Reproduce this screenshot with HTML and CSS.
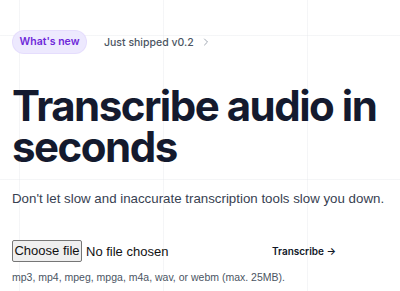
FILE: index.html
```html
<!DOCTYPE html>
<html lang="en">
<head>
<meta charset="utf-8">
<link rel="stylesheet" href="styles.css">
</head>
<body>
<div class="grid-bg"></div>
<main class="hero">
  <div class="announce">
    <span class="badge">What's new</span>
    <span class="shipped">Just shipped v0.2
      <svg class="chev" viewBox="0 0 20 20" width="12" height="12"><path d="M7.5 5l5 5-5 5" fill="none" stroke="currentColor" stroke-width="1.6" stroke-linecap="round" stroke-linejoin="round"/></svg>
    </span>
  </div>
  <h1 class="title">Transcribe audio in seconds</h1>
  <p class="lead">Don't let slow and inaccurate transcription tools slow you down.</p>
  <form class="upload">
    <div class="row">
      <label class="picker">
        <input class="file" type="file">
        <span class="choose">Choose file</span>
        <span class="none">No file chosen</span>
      </label>
      <button class="go" type="button">Transcribe <span aria-hidden="true">→</span></button>
    </div>
    <p class="hint">mp3, mp4, mpeg, mpga, m4a, wav, or webm (max. 25MB).</p>
  </form>
</main>
</body>
</html>
```
FILE: styles.css
```css
html, body { margin: 0; padding: 0; background: #fff; }
body { font-family: Inter, "Noto Sans", sans-serif; color: #111827; overflow: hidden; position: relative; width: 400px; height: 291px; }
.grid-bg {
  position: absolute; inset: 0; z-index: 0;
  background-image:
    linear-gradient(to right, rgba(229,231,235,0.4) 1px, transparent 1px),
    linear-gradient(to bottom, rgba(229,231,235,0.4) 1px, transparent 1px);
  background-size: 144px 144px;
  background-position: 19px 35px;
}
.hero { position: relative; z-index: 1; padding: 30px 12px 0 12px; }
.announce { display: flex; align-items: center; gap: 17px; height: 24px; white-space: nowrap; }
.badge { background: #ede9fe; color: #6d28d9; border-radius: 999px; padding: 0; height: 24px; line-height: 22px; font-size: 10.5px; font-weight: 600; border: 1px solid rgba(139,92,246,0.08); box-sizing: border-box; width: 75px; text-align: center; }
.shipped { color: #4b5563; font-size: 10.5px; font-weight: 500; display: flex; align-items: center; gap: 6px; }
.chev { color: #9ca3af; }
.title { margin: 31px 0 0 0; font-size: 42px; line-height: 41px; font-weight: 700; letter-spacing: -1.5px; color: #141a2e; }
.lead { margin: 22px 0 0 0; font-size: 13.3px; line-height: 20px; color: #374151; font-family: "Liberation Sans", Arial, sans-serif; white-space: nowrap; }
.upload { margin-top: 31px; }
.row { display: flex; align-items: center; white-space: nowrap; }
.picker { display: flex; align-items: center; width: 260px; font-family: "Liberation Sans", Arial, sans-serif; font-size: 13px; color: #111; }
.file { display: none; }
.choose { box-sizing: border-box; height: 22px; line-height: 20px; padding: 0; background: #efefef; border: 1px solid #767676; border-radius: 2px; width: 70px; text-align: center; }
.none { margin-left: 4px; }
.go { background: none; border: 0; padding: 0; font-family: Inter, sans-serif; font-size: 10px; font-weight: 600; color: #111827; }
.hint { margin: 8px 0 0 0; font-size: 10.5px; line-height: 14px; color: #4b5563; font-family: "Liberation Sans", Arial, sans-serif; white-space: nowrap; }
```
